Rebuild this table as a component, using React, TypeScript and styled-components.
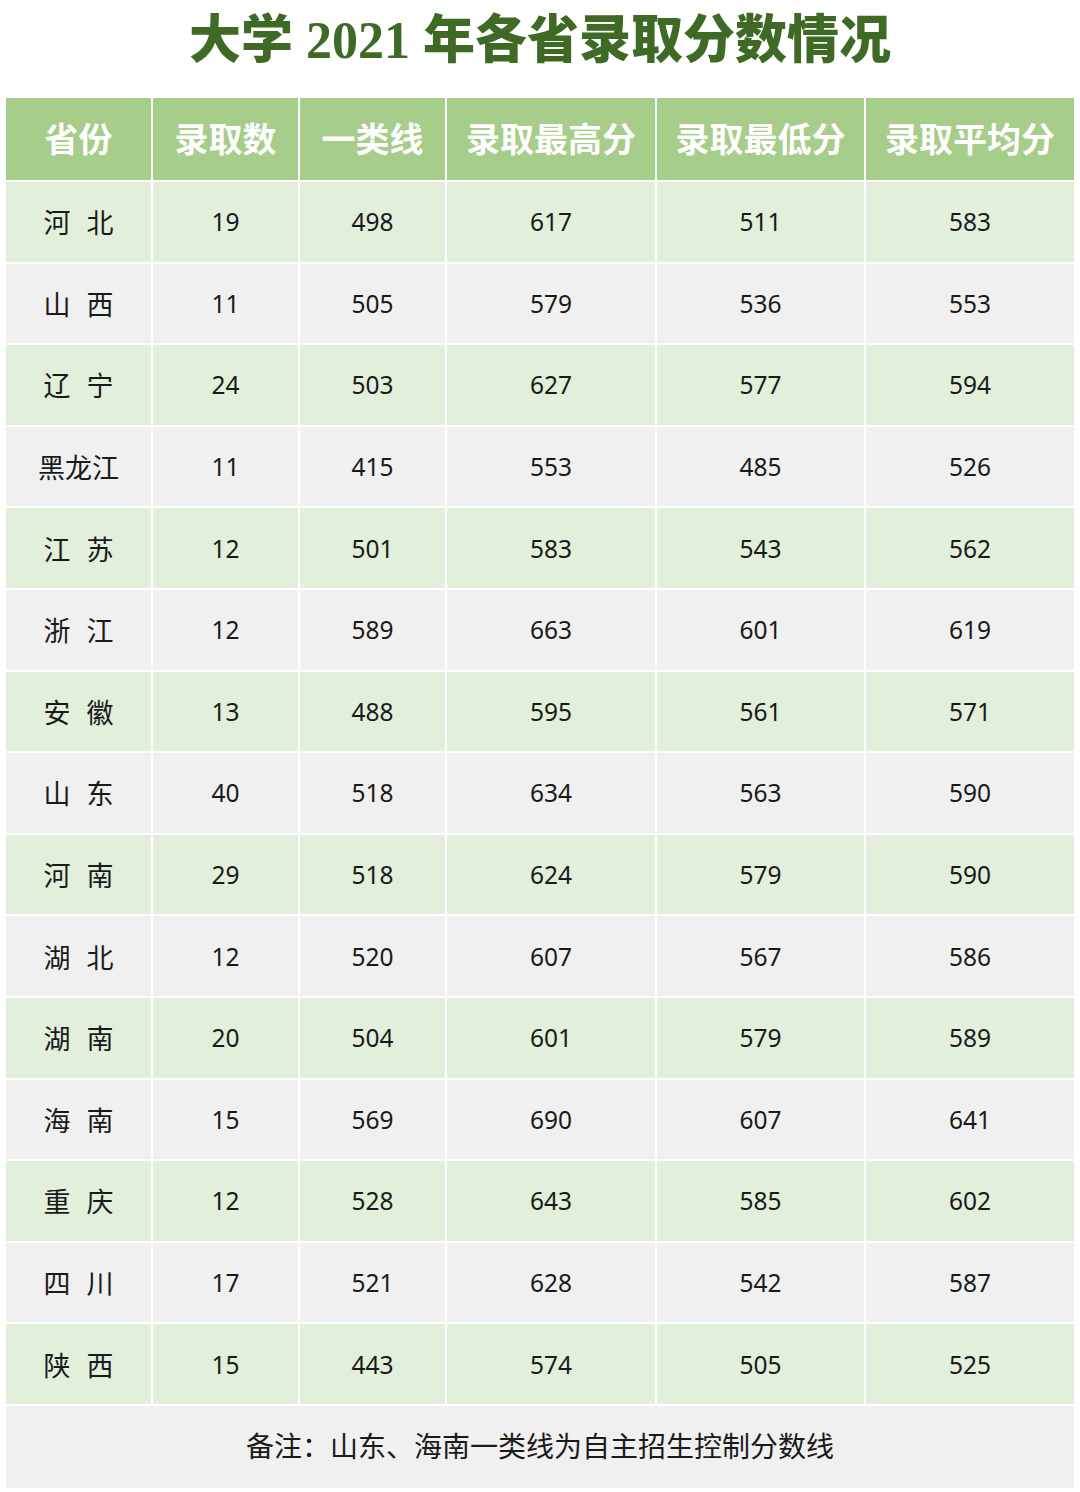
import React from "react";
import styled, { createGlobalStyle } from "styled-components";

const Global = createGlobalStyle`
  html, body { margin: 0; padding: 0; background: #ffffff; }
  body { width: 1080px; }
`;

const Page = styled.div`
  width: 1080px;
  height: 1492px;
  padding: 0 6px;
  box-sizing: border-box;
  background: #ffffff;
`;

const Title = styled.h1`
  margin: 0;
  height: 98px;
  display: flex;
  align-items: center;
  justify-content: center;
  padding-bottom: 28px;
  box-sizing: border-box;
  font-family: "Liberation Serif", "Noto Sans CJK SC", serif;
  font-weight: 900;
  font-size: 52px;
  color: #3f6a26;
  white-space: pre;
`;

const Grid = styled.div`
  display: grid;
  grid-template-columns: 145px 145px 145px 208px 207px 208px;
  column-gap: 2px;
  row-gap: 2px;
`;

const HeadCell = styled.div`
  height: 82px;
  background: #a6cd89;
  color: #ffffff;
  display: flex;
  align-items: center;
  justify-content: center;
  font-family: "Noto Sans CJK SC", serif;
  font-weight: 700;
  font-size: 34px;
  padding-bottom: 4px;
  box-sizing: border-box;
`;

const Cell = styled.div<{ $alt: boolean; $cjk?: boolean }>`
  height: 79.6px;
  background: ${(p) => (p.$alt ? "#f0f0f0" : "#e2efda")};
  color: #1a1a1a;
  display: flex;
  align-items: center;
  justify-content: center;
  font-family: ${(p) => (p.$cjk ? '"Noto Sans CJK SC", sans-serif' : '"Noto Sans", "Open Sans", sans-serif')};
  font-size: ${(p) => (p.$cjk ? "27px" : "24.5px")};
  word-spacing: ${(p) => (p.$cjk ? "10px" : "0")};
  white-space: pre;
`;

const Note = styled.div`
  grid-column: 1 / -1;
  height: 82px;
  background: #f0f0f0;
  display: flex;
  align-items: center;
  justify-content: center;
  font-family: "Noto Sans CJK SC", sans-serif;
  font-size: 28px;
  color: #1a1a1a;
  padding-bottom: 4px;
  box-sizing: border-box;
`;

const headers = ["省份", "录取数", "一类线", "录取最高分", "录取最低分", "录取平均分"];

const rows: [string, number, number, number, number, number][] = [
  ["河 北", 19, 498, 617, 511, 583],
  ["山 西", 11, 505, 579, 536, 553],
  ["辽 宁", 24, 503, 627, 577, 594],
  ["黑龙江", 11, 415, 553, 485, 526],
  ["江 苏", 12, 501, 583, 543, 562],
  ["浙 江", 12, 589, 663, 601, 619],
  ["安 徽", 13, 488, 595, 561, 571],
  ["山 东", 40, 518, 634, 563, 590],
  ["河 南", 29, 518, 624, 579, 590],
  ["湖 北", 12, 520, 607, 567, 586],
  ["湖 南", 20, 504, 601, 579, 589],
  ["海 南", 15, 569, 690, 607, 641],
  ["重 庆", 12, 528, 643, 585, 602],
  ["四 川", 17, 521, 628, 542, 587],
  ["陕 西", 15, 443, 574, 505, 525],
];

export default function App() {
  return (
    <Page>
      <Global />
      <Title>大学 2021 年各省录取分数情况</Title>
      <Grid>
        {headers.map((h) => (
          <HeadCell key={h}>{h}</HeadCell>
        ))}
        {rows.map((r, i) =>
          r.map((v, j) => (
            <Cell key={`${i}-${j}`} $alt={i % 2 === 1} $cjk={j === 0}>
              {v}
            </Cell>
          ))
        )}
        <Note>备注：山东、海南一类线为自主招生控制分数线</Note>
      </Grid>
    </Page>
  );
}
